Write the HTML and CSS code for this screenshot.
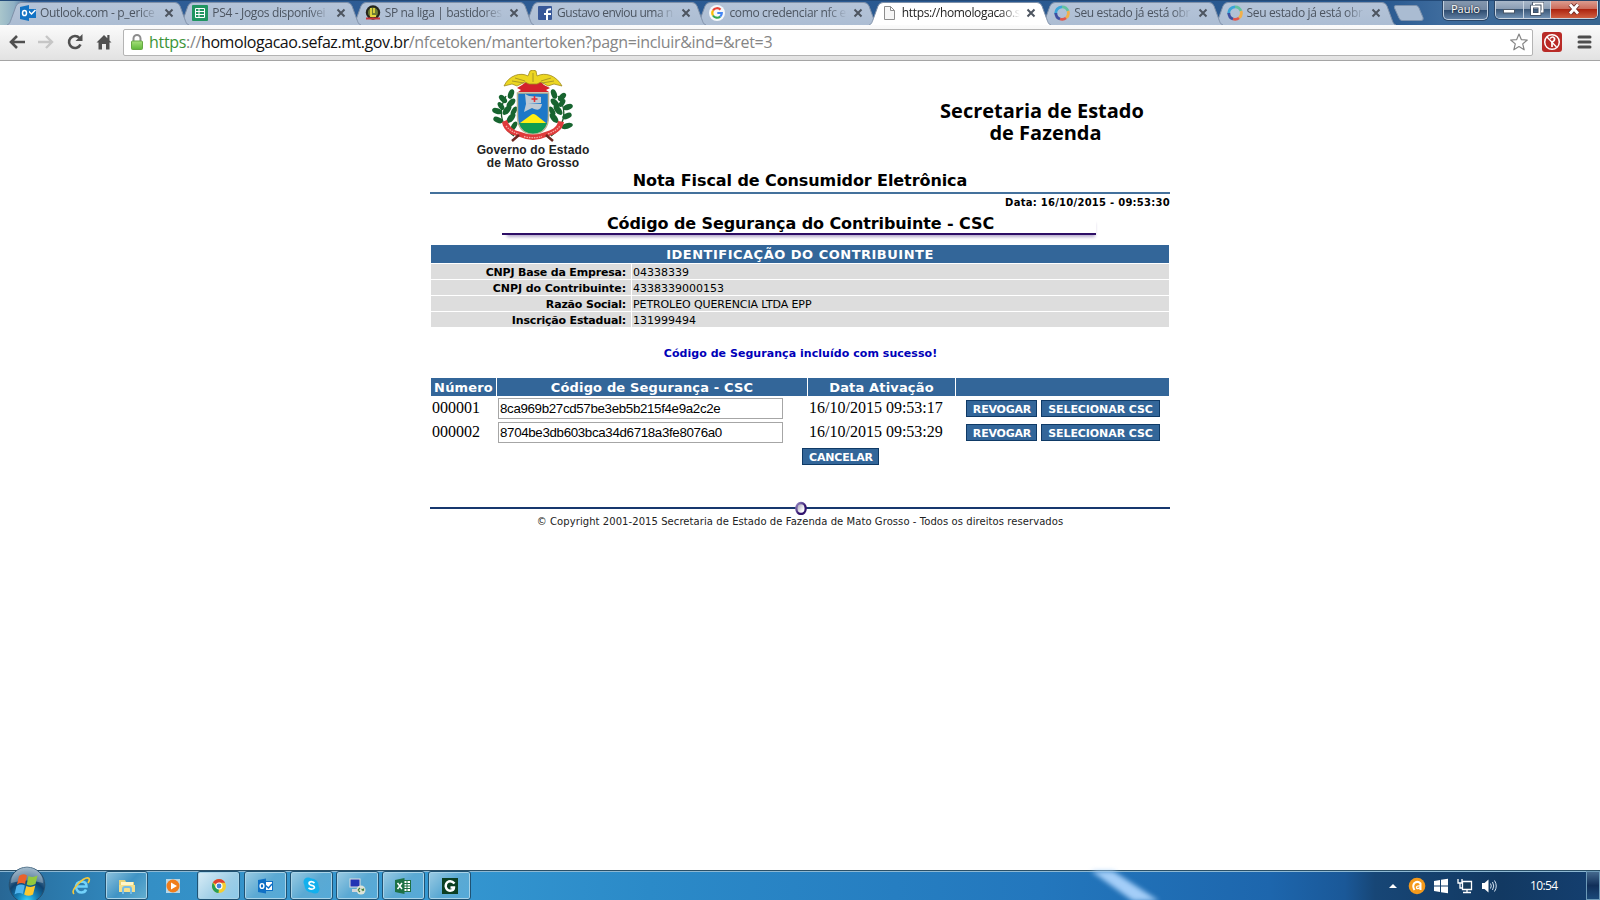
FILE: index.html
```html
<!DOCTYPE html>
<html lang="pt-BR">
<head>
<meta charset="utf-8">
<title>Nota Fiscal de Consumidor Eletrônica</title>
<link rel="stylesheet" href="styles.css">
</head>
<body>
<svg class="defs" width="0" height="0">
  <defs>
    <linearGradient id="tabFill" x1="0" y1="0" x2="0" y2="1"><stop offset="0" stop-color="#b5c4d8"/><stop offset="1" stop-color="#acbdd3"/></linearGradient>
    <linearGradient id="lockFill" x1="0" y1="0" x2="0" y2="1"><stop offset="0" stop-color="#a6e07a"/><stop offset="1" stop-color="#5fb838"/></linearGradient>
    <radialGradient id="orb" cx=".5" cy=".95" r=".95"><stop offset="0" stop-color="#35d6ff"/><stop offset=".3" stop-color="#1581b8"/><stop offset=".6" stop-color="#0f426f"/><stop offset="1" stop-color="#7fa0b8"/></radialGradient>
    <linearGradient id="ring" x1="0" y1="0" x2="1" y2="1"><stop offset="0" stop-color="#9a8cc8"/><stop offset=".6" stop-color="#32146e"/></linearGradient>
    <linearGradient id="ringIn" x1="0" y1="0" x2="1" y2="1"><stop offset="0" stop-color="#9590a8"/><stop offset=".7" stop-color="#fff"/></linearGradient>
    <symbol id="tabShape" viewBox="0 0 182 24"><path d="M0 24C3 23 3 21 5 16L9 5Q10.500 1.500 14 1.500H168Q171.500 1.500 173 5L177 16C179 21 179 23 182 24" stroke="#7f90a8"/></symbol>
    <symbol id="x" viewBox="0 0 10 10"><path d="M1.500 1.500L8.500 8.500M8.500 1.500L1.500 8.500" stroke="#4d5560" stroke-width="2"/></symbol>
    <symbol id="swirl" viewBox="0 0 16 16"><g fill="none" stroke-width="2.800"><path d="M1.800 9A6.400 6.400 0 0 1 8 1.800" stroke="#3aa5d8"/><path d="M8 1.800A6.400 6.400 0 0 1 14 6" stroke="#62c2a0"/><path d="M14 6A6.400 6.400 0 0 1 12 13" stroke="#f2b04a"/><path d="M12 13A6.400 6.400 0 0 1 6 14" stroke="#e2574c"/><path d="M6 14A6.400 6.400 0 0 1 1.800 8" stroke="#3e4fa0"/></g></symbol>
  </defs>
</svg>

<header class="browser">
  <div class="tabstrip">
    <div class="tab"><svg class="shape"><use href="#tabShape"/></svg>
      <svg class="fav" viewBox="0 0 16 16"><rect x="7" y="4" width="9" height="9" fill="#1373c4"/><path d="M7.500 5L11.500 9L15.500 5" fill="none" stroke="#fff" stroke-width="1.500"/><path d="M0 2L9 0V16L0 14Z" fill="#1373c4"/><ellipse cx="4.500" cy="8" rx="2" ry="2.600" fill="none" stroke="#fff" stroke-width="1.500"/></svg>
      <span class="title">Outlook.com - p_erice</span><svg class="close"><use href="#x"/></svg></div>
    <div class="tab"><svg class="shape"><use href="#tabShape"/></svg>
      <svg class="fav" viewBox="0 0 16 16"><rect width="16" height="16" rx="1" fill="#1f9560"/><path d="M3.500 3.500H12.500V12.500H3.500ZM3.500 6.500H12.500M3.500 9.500H12.500M7 3.500V12.500" fill="none" stroke="#fff"/></svg>
      <span class="title">PS4 - Jogos disponívei</span><svg class="close"><use href="#x"/></svg></div>
    <div class="tab"><svg class="shape"><use href="#tabShape"/></svg>
      <svg class="fav" viewBox="0 0 16 16"><circle cx="8" cy="7.500" r="7.200" fill="#25251c"/><circle cx="8" cy="7.500" r="5" fill="#6e7d34"/><path d="M6 3V11H11M9 3V8" stroke="#e5d83f" stroke-width="1.800" fill="none"/><path d="M1 13.500H15" stroke="#c5373c" stroke-width="2"/></svg>
      <span class="title">SP na liga | bastidores</span><svg class="close"><use href="#x"/></svg></div>
    <div class="tab"><svg class="shape"><use href="#tabShape"/></svg>
      <svg class="fav" viewBox="0 0 16 16"><rect x="1" y="1" width="14" height="14" rx="1" fill="#385898"/><path d="M10 15V9H14M7 9H10M10 10V6.500Q10 4 14 4.300" stroke="#fff" stroke-width="2" fill="none"/></svg>
      <span class="title tight">Gustavo enviou uma n</span><svg class="close"><use href="#x"/></svg></div>
    <div class="tab"><svg class="shape"><use href="#tabShape"/></svg>
      <svg class="fav" viewBox="0 0 16 16"><circle cx="8" cy="8" r="8" fill="#f5f8fb"/><g fill="none" stroke-width="2.200"><path d="M4 5.500A4.800 4.800 0 0 1 11.500 4.600" stroke="#e94335"/><path d="M4 5.500A4.800 4.800 0 0 0 4 10.500" stroke="#fbbc05"/><path d="M4 10.500A4.800 4.800 0 0 0 11.200 11.600" stroke="#34a853"/><path d="M11.200 11.600A4.800 4.800 0 0 0 12.800 8H8.300" stroke="#4285f4"/></g></svg>
      <span class="title">como credenciar nfc e</span><svg class="close"><use href="#x"/></svg></div>
    <div class="tab active"><svg class="shape"><use href="#tabShape"/></svg>
      <svg class="fav" viewBox="0 0 16 16"><path d="M2.500 1.500H8.500L12.500 5.500V14.500H2.500ZM8.500 1.500V5.500H12.500" fill="#f6f6f6" stroke="#8c8c8c"/></svg>
      <span class="title">https://homologacao.s</span><svg class="close"><use href="#x"/></svg></div>
    <div class="tab"><svg class="shape"><use href="#tabShape"/></svg><svg class="fav"><use href="#swirl"/></svg>
      <span class="title">Seu estado já está obr</span><svg class="close"><use href="#x"/></svg></div>
    <div class="tab"><svg class="shape"><use href="#tabShape"/></svg><svg class="fav"><use href="#swirl"/></svg>
      <span class="title">Seu estado já está obr</span><svg class="close"><use href="#x"/></svg></div>
    <svg class="newtab" viewBox="0 0 32 16"><path d="M3 .5H23Q25 .5 26 3L30 12.500Q31 15.500 28 15.500H9Q7 15.500 6 13L1.500 3Q.5 .5 3 .5Z" fill="#aabcd2" stroke="#7d92ad"/></svg>
    <span class="user">Paulo</span>
    <div class="winbtns">
      <span class="wb min"><svg width="14" height="14" viewBox="0 0 14 14"><rect x="1.500" y="7.500" width="11" height="3.500" fill="#fff" stroke="#4b5868"/></svg></span>
      <span class="wb max"><svg width="14" height="14" viewBox="0 0 14 14"><path d="M4 3V1.500H12.500V9.500H11M2 4.500H9.500V12H2Z" fill="none" stroke="#3d4a5c" stroke-width="3.500"/><path d="M4 3V1.500H12.500V9.500H11M2 4.500H9.500V12H2Z" fill="none" stroke="#fff" stroke-width="2"/></svg></span>
      <span class="wb cls"><svg width="14" height="14" viewBox="0 0 14 14"><path d="M3 2.500L11 11.500M11 2.500L3 11.500" stroke="#6b2a25" stroke-width="4.500"/><path d="M3 2.500L11 11.500M11 2.500L3 11.500" stroke="#fff" stroke-width="2.800"/></svg></span>
    </div>
  </div>
  <div class="toolbar">
    <svg class="tool" viewBox="0 0 18 18"><path d="M17 9H3M9 3L3 9L9 15" fill="none" stroke="#505050" stroke-width="2.600"/></svg>
    <svg class="tool" viewBox="0 0 18 18"><path d="M1 9H15M9 3L15 9L9 15" fill="none" stroke="#c6c6c6" stroke-width="2.400"/></svg>
    <svg class="tool" viewBox="0 0 18 18"><path d="M14.500 11.500A6 6 0 1 1 13.500 5" fill="none" stroke="#505050" stroke-width="2.600"/><path d="M16.500 1V8H9.500Z" fill="#505050"/></svg>
    <svg class="tool" viewBox="0 0 18 18"><path d="M9 2L1.500 9.500H3.500V16.500H7V11H11V16.500H14.500V9.500H16.500L14.500 7.500V2H12.300V5.300Z" fill="#505050"/></svg>
    <div class="omnibox">
      <svg class="lock" viewBox="0 0 12 16"><path d="M2.500 8V4.500A3.500 3.500 0 0 1 9.500 4.500V8" fill="none" stroke="#8d8d8d" stroke-width="2"/><rect x=".5" y="7" width="11" height="8.500" rx="1" fill="url(#lockFill)" stroke="#67a844"/></svg>
      <span class="url"><span class="sec">https</span>://<span class="host">homologacao.sefaz.mt.gov.br</span>/nfcetoken/mantertoken?pagn=incluir&amp;ind=&amp;ret=3</span>
      <svg class="star" viewBox="0 0 18 18"><path d="M9 1L11.300 6.600L17.300 7L12.700 10.900L14.200 16.800L9 13.600L3.800 16.800L5.300 10.900L.7 7L6.700 6.600Z" fill="#fff" stroke="#858585" stroke-width="1.200" stroke-linejoin="round"/></svg>
    </div>
    <svg class="ext" viewBox="0 0 20 20"><rect width="20" height="20" rx="3" fill="#b92b27"/><circle cx="10" cy="10" r="7.300" fill="none" stroke="#fff" stroke-width="1.500"/><path d="M5 5L14.500 15" stroke="#fff" stroke-width="1.300"/><path d="M8 6.500Q11 3.500 12.500 6.500Q13 9 10 10V15" fill="none" stroke="#fff" stroke-width="1.700"/></svg>
    <svg class="menu" viewBox="0 0 14 14"><path d="M1.500 2H12.500M1.500 7H12.500M1.500 12H12.500" stroke="#4d4d4d" stroke-width="3" stroke-linecap="round"/></svg>
  </div>
</header>

<main class="page">
  <div class="brand">
    <div class="gov">
      <svg class="crest" viewBox="0 0 82 72">
        <g stroke="#1d5a2a" stroke-width="1.300" fill="none"><path d="M22 66C10 58 5 42 14 26M59 66C71 58 77 42 66 26"/></g>
        <g fill="#17642f">
          <ellipse cx="19" cy="24" rx="2.800" ry="5" transform="rotate(20 19 24)"/><ellipse cx="11" cy="29" rx="2.800" ry="5" transform="rotate(-45 11 29)"/><ellipse cx="19" cy="33" rx="3" ry="5.500" transform="rotate(45 19 33)"/><ellipse cx="5" cy="41" rx="2.800" ry="5" transform="rotate(-70 5 41)"/><ellipse cx="15" cy="40" rx="3" ry="6" transform="rotate(40 15 40)"/><ellipse cx="22" cy="41" rx="2.500" ry="5" transform="rotate(30 22 41)"/><ellipse cx="6" cy="50" rx="2.800" ry="5" transform="rotate(-65 6 50)"/><ellipse cx="19" cy="48" rx="3" ry="6" transform="rotate(40 19 48)"/><ellipse cx="22" cy="56" rx="2.500" ry="5" transform="rotate(30 22 56)"/><ellipse cx="9" cy="36" rx="2.500" ry="4.500" transform="rotate(-35 9 36)"/>
          <ellipse cx="62" cy="24" rx="2.800" ry="5" transform="rotate(-20 62 24)"/><ellipse cx="70" cy="27" rx="2.800" ry="5" transform="rotate(45 70 27)"/><ellipse cx="63" cy="33" rx="3" ry="5.500" transform="rotate(-45 63 33)"/><ellipse cx="76" cy="37" rx="2.800" ry="5" transform="rotate(70 76 37)"/><ellipse cx="66" cy="40" rx="3" ry="6" transform="rotate(-40 66 40)"/><ellipse cx="60" cy="41" rx="2.500" ry="5" transform="rotate(-30 60 41)"/><ellipse cx="75" cy="46" rx="2.800" ry="5" transform="rotate(65 75 46)"/><ellipse cx="62" cy="48" rx="3" ry="6" transform="rotate(-40 62 48)"/><ellipse cx="75" cy="56" rx="2.800" ry="6" transform="rotate(75 75 56)"/><ellipse cx="70" cy="33" rx="2.500" ry="4.500" transform="rotate(35 70 33)"/>
        </g>
        <path d="M30 15L25 18L29 20L26 22H57L54 20L58 18L52 15L49 12H34Z" fill="#d3222b"/>
        <path d="M12 16C17 5 29 2 36 6L38 1Q41 -1 44 1L45 6C53 2 64 5 70 16L62 14L56 16L49 12L45 14H37L33 12L25 16L20 14Z" fill="#ecd622" stroke="#a08a20" stroke-width=".8"/>
        <path d="M23 8L33 11M20 11L32 13M59 8L49 11M62 11L50 13M41 3V12" stroke="#9b8a25" stroke-width=".8"/>
        <path d="M25.500 23H56.500V46Q56.500 63 41 64Q25.500 63 25.500 46Z" fill="#1e78c8" stroke="#b9b391" stroke-width="1.500"/>
        <path d="M27 53H55Q52 63 41 63.500Q30 63 27 53Z" fill="#109c50"/><path d="M28 53L39 45Q41 43 44 45L54 53Z" fill="#ffef12"/>
        <path d="M33 24L37 26L49 27V33L36 34L50 34C49 40 46 41 40 38L32 42L34 34Z" fill="#bdc9d4"/><path d="M42.500 26V32M39.500 29H45.500" stroke="#e32b32" stroke-width="1.600"/>
        <path d="M10 52L15 50C18 59 24 61 29 62Q41 67 53 62C59 60 65 58 66 51L72 52C71 60 63 65 54 67Q41 73 28 67C18 65 11 60 10 52Z" fill="#df3b3b"/>
        <path d="M14 56Q19 62 27 64M32 66.500Q41 69 50 66.500M56 64Q64 61 68 56" fill="none" stroke="#f6aaa4" stroke-width="1.300" stroke-dasharray="1.500 1"/>
        <path d="M20 71L27 65M61 71L54 65" stroke="#6c2720" stroke-width="2.500"/>
      </svg>
      <div class="govname">Governo do Estado<br>de Mato Grosso</div>
    </div>
    <div class="sec-name"><div class="l1">Secretaria de Estado</div><div class="l2">de Fazenda</div></div>
  </div>
  <h1 class="nf">Nota Fiscal de Consumidor Eletrônica</h1>
  <div class="date"><span>Data: 16/10/2015 - 09:53:30</span></div>
  <h2 class="csc">Código de Segurança do Contribuinte - CSC</h2>
  <div class="ident">
    <div class="bar">IDENTIFICAÇÃO DO CONTRIBUINTE</div>
    <div class="lab">CNPJ Base da Empresa:</div><div class="val">04338339</div>
    <div class="lab wide">CNPJ do Contribuinte:</div><div class="val">4338339000153</div>
    <div class="lab">Razão Social:</div><div class="val name">PETROLEO QUERENCIA LTDA EPP</div>
    <div class="lab">Inscrição Estadual:</div><div class="val">131999494</div>
  </div>
  <p class="ok">Código de Segurança incluído com sucesso!</p>
  <div class="tokens">
    <div class="th">Número</div><div class="th">Código de Segurança - CSC</div><div class="th">Data Ativação</div><div class="th"></div>
    <div class="td">000001</div><div class="td"><div class="field">8ca969b27cd57be3eb5b215f4e9a2c2e</div></div><div class="td">16/10/2015 09:53:17</div><div class="td acts"><span class="btn rev">REVOGAR</span><span class="btn sel">SELECIONAR CSC</span></div>
    <div class="td">000002</div><div class="td"><div class="field">8704be3db603bca34d6718a3fe8076a0</div></div><div class="td">16/10/2015 09:53:29</div><div class="td acts"><span class="btn rev">REVOGAR</span><span class="btn sel">SELECIONAR CSC</span></div>
  </div>
  <div class="cancel"><span class="btn can">CANCELAR</span></div>
  <div class="rule"><svg width="12" height="14" viewBox="0 0 12 14"><ellipse cx="6" cy="7.500" rx="4.700" ry="5.500" fill="url(#ringIn)" stroke="url(#ring)" stroke-width="2.300"/></svg></div>
  <footer class="copy">© Copyright 2001-2015 Secretaria de Estado de Fazenda de Mato Grosso - Todos os direitos reservados</footer>
</main>

<div class="taskbar">
  <svg class="beam" width="90" height="30" viewBox="0 0 90 30"><path d="M8 0H30L76 30H50Z" fill="#a4cef8"/></svg>
  <svg class="start" viewBox="0 0 38 38"><circle cx="19" cy="19" r="17.800" fill="url(#orb)" stroke="#27506f"/><path d="M3 17A16 16 0 0 1 35 17Q19 12 3 17Z" fill="#fff" opacity=".3"/><path d="M11 10Q15 7 19 9.500L17 18Q13 16 9 18.500Z" fill="#e9622c"/><path d="M20.500 10Q25 12 29.500 9.500L27.500 18Q23 20.500 18.700 18.500Z" fill="#93c83e"/><path d="M8.500 20Q12.500 17.500 16.800 19.500L14.800 28Q11 26 6.500 28.500Z" fill="#4fb3ee"/><path d="M18.300 20Q23 22 27.300 19.500L25 28.500Q20.500 31 16.200 28.500Z" fill="#fbc82f"/></svg>
  <span class="tb plain ie"><svg width="20" height="20" viewBox="0 0 20 20"><path d="M5 10.500H15.500Q15.500 5.500 10.500 5.500Q5 6 5 11.500Q6 16.500 10.500 16.500Q14 16.500 15 13.500" fill="none" stroke="#73d2fa" stroke-width="2.500"/><path d="M3 18Q0 15 7 8Q15 0 18 2.500Q19 4 17 7" fill="none" stroke="#f2c83b" stroke-width="1.700"/></svg></span>
  <span class="tb dim"><svg width="18" height="18" viewBox="0 0 18 18"><path d="M1 3H7L8 5H16V15H1Z" fill="#e9d377"/><path d="M3 5H15V8H3Z" fill="#fff6c8"/><path d="M1 8H17V15H1Z" fill="#f3df8d"/><path d="M5 17V12Q5 10 7 10H11Q13 10 13 12V17" fill="none" stroke="#75bce7" stroke-width="2"/></svg></span>
  <span class="tb plain media"><svg width="16" height="16" viewBox="0 0 16 16"><rect x="1" y="1" width="14" height="14" fill="#b8d7e7"/><circle cx="8" cy="8" r="6.500" fill="#f07d1b"/><path d="M6 4.500L12 8L6 11.500Z" fill="#fff"/></svg></span>
  <span class="tb on"><svg width="16" height="16" viewBox="0 0 16 16"><circle cx="8" cy="8" r="7" fill="#f4ce30"/><path d="M8 8L1.900 4.500A7 7 0 0 1 14.200 4.700H8Z" fill="#dd4031"/><path d="M1.900 4.500L5 10L8 10.500L7.500 15A7 7 0 0 1 1.900 4.500Z" fill="#279e55"/><circle cx="8" cy="8" r="3" fill="#4382dc" stroke="#fff" stroke-width="1.200"/></svg></span>
  <span class="tb"><svg width="16" height="16" viewBox="0 0 16 16"><rect x="7.500" y="3.500" width="8" height="9" fill="#fff" stroke="#0f70c5"/><path d="M8 7L11.500 10L15 6" fill="none" stroke="#0f70c5" stroke-width="1.500"/><path d="M1 2L9 .5V15.500L1 14Z" fill="#0f70c5"/><ellipse cx="5" cy="8" rx="1.900" ry="2.400" fill="none" stroke="#fff" stroke-width="1.400"/></svg></span>
  <span class="tb"><svg width="17" height="17" viewBox="0 0 17 17"><circle cx="8.500" cy="8.500" r="7" fill="#13b0ed"/><circle cx="5" cy="5" r="4.500" fill="#13b0ed"/><circle cx="12" cy="12" r="4.500" fill="#13b0ed"/><path d="M11.500 6Q8.500 3.500 6.200 5.500Q5.500 7.700 8.500 8.300Q12 9 11.300 11Q9 13.300 5.500 11" fill="none" stroke="#fff" stroke-width="1.700"/></svg></span>
  <span class="tb"><svg width="18" height="18" viewBox="0 0 18 18"><rect x="2" y="2" width="10" height="8" fill="#2335b4" stroke="#ddd"/><path d="M4 12H11V15H4Z" fill="#d3d5d9"/><circle cx="13" cy="13" r="4.500" fill="#dde3d8"/><path d="M10 13L12 15M12 11L10 13M13.500 12L16 13.500M16 11.500L14 14" stroke="#48803c" stroke-width="1.200"/></svg></span>
  <span class="tb"><svg width="16" height="16" viewBox="0 0 16 16"><rect x="8.500" y="2.500" width="7" height="11" fill="#fff" stroke="#1e7145"/><path d="M9 5.500H15M9 8H15M9 10.500H15M12 3V13" stroke="#1e7145"/><path d="M0 2L9.500 0V16L0 14Z" fill="#1e7145"/><path d="M2.500 5L7 11M7 5L2.500 11" stroke="#fff" stroke-width="1.500"/></svg></span>
  <span class="tb"><svg width="16" height="16" viewBox="0 0 16 16"><rect width="16" height="16" fill="#0b3f22"/><path d="M12.500 5.500Q10 2.500 6.500 3.500Q3.500 5 3.700 8.500Q4.500 12.500 8 12.700Q12 12.500 12 9.500H8.500" fill="none" stroke="#fff" stroke-width="2.400"/></svg></span>
  <div class="tray">
    <svg width="8" height="6" viewBox="0 0 8 6"><path d="M0 5L4 1L8 5Z" fill="#fff"/></svg>
    <svg class="avast" width="18" height="18" viewBox="0 0 18 18"><circle cx="9" cy="9" r="8.300" fill="#f49a1c"/><path d="M6.500 13Q4 9 6.500 6Q10 3.500 12.500 6.500V13" fill="none" stroke="#fff" stroke-width="2"/><path d="M12 9Q8 8.500 8.500 11Q10 12.500 12 10.500" fill="none" stroke="#fff" stroke-width="1.300"/></svg>
    <svg class="win" width="16" height="16" viewBox="0 0 16 16"><path d="M1 3L7 2V7.500H1ZM8 1.800L15 .8V7.500H8ZM1 8.500H7V14L1 13ZM8 8.500H15V15.200L8 14.200Z" fill="#fff"/></svg>
    <svg class="net" width="16" height="16" viewBox="0 0 16 16"><path d="M5.500 3.500H14.500V11.500H5.500Z" fill="#173b5b" stroke="#fff" stroke-width="1.300"/><path d="M10 12V14M6 14.500H14M1 1V5H5V1M3 5V10H5" stroke="#fff" stroke-width="1.300" fill="none"/></svg>
    <svg class="snd" width="16" height="16" viewBox="0 0 16 16"><path d="M1 5H3.500L7.500 1.500V14.500L3.500 11H1Z" fill="#fff"/><path d="M9.500 5.500Q11 8 9.500 10.500M11.500 4Q14 8 11.500 12M13.500 2.500Q17 8 13.500 13.500" fill="none" stroke="#d6e4f2"/></svg>
    <span class="clock">10:54</span>
  </div>
  <span class="desk"></span>
</div>
</body>
</html>
```
FILE: styles.css
```css
* { box-sizing: border-box; }
body { margin: 0; width: 1600px; height: 900px; overflow: hidden; display: flex; flex-direction: column; background: #fff; color: #000; }
svg { display: block; flex: none; }
.defs { position: absolute; }

/* browser frame */
.browser { flex: none; }
.tabstrip { height: 25px; display: flex; padding-left: 7px; border-top: 1px solid #234a78; background: linear-gradient(90deg, #a9c6cc 0, #8fb0c4 14px, #2f5d96 30px, #28588f 1380px, #3d6b9d 1440px, #38658f 1600px); }
.tab { position: relative; flex: none; width: 182px; height: 24px; margin-right: -9.650px; display: flex; align-items: center; padding-left: 13px; color: #4c5561; }
.tab:nth-child(1) { z-index: 9; } .tab:nth-child(2) { z-index: 8; } .tab:nth-child(3) { z-index: 7; } .tab:nth-child(4) { z-index: 6; } .tab:nth-child(5) { z-index: 5; } .tab:nth-child(7) { z-index: 3; } .tab:nth-child(8) { z-index: 2; }
.shape { position: absolute; left: 0; top: 0; width: 182px; height: 24px; z-index: -1; fill: url(#tabFill); }
.tab.active { z-index: 10; color: #222; }
.tab.active .shape { fill: #fff; }
.fav { width: 16px; height: 16px; }
.title { width: 118px; margin-left: 4px; font: 12px/20px "Open Sans", sans-serif; letter-spacing: -.35px; white-space: nowrap; overflow: hidden; -webkit-mask-image: linear-gradient(90deg, #000 98px, transparent 118px); mask-image: linear-gradient(90deg, #000 98px, transparent 118px); }
.title.tight { letter-spacing: -.5px; }
.close { width: 10px; height: 10px; margin-left: 6px; }
.newtab { width: 32px; height: 16px; margin: 4px 0 0 7px; }
.user { width: 45px; height: 19px; margin-left: 18px; border: 1px solid #c3d0df; border-top: 0; border-radius: 0 0 5px 5px; background: linear-gradient(#8497ae 0, #7388a2 50%, #2f4c70 51%, #5f7ea1); box-shadow: 0 0 0 1px #294567; color: #fff; font: 11px/15px "Open Sans", sans-serif; text-align: center; text-shadow: 0 0 2px #000; }
.winbtns { display: flex; height: 18px; margin-left: 7px; border: 1px solid #c9d4e0; border-top: 0; border-radius: 0 0 5px 5px; box-shadow: 0 0 0 1px #294567; overflow: hidden; }
.wb { display: flex; align-items: center; justify-content: center; background: linear-gradient(#a9b8c9 0, #8a9db4 45%, #3b5878 50%, #6f90b3); padding-bottom: 2px; }
.min { width: 28px; border-right: 1px solid #c9d4e0; }
.max { width: 27px; border-right: 1px solid #c9d4e0; }
.cls { width: 46px; background: linear-gradient(#dc9c8f 0, #cc6d5c 45%, #ad2510 50%, #cf5f40); }
.toolbar { height: 36px; display: flex; align-items: center; background: linear-gradient(#fbfbfb, #e2e2e2); border-bottom: 1px solid #a5a5a5; padding: 0 8px 1px; }
.tool { width: 18px; height: 18px; margin-right: 11px; }
.omnibox { width: 1410px; height: 27px; display: flex; align-items: center; margin-left: -1px; border: 1px solid #b4b4b4; border-radius: 2px; background: #fff; padding: 0 4px 0 7px; }
.lock { width: 12px; height: 16px; }
.url { flex: 1; margin-left: 6px; font: 16px/24px "Open Sans", sans-serif; letter-spacing: -.32px; color: #858585; white-space: nowrap; }
.sec { color: #3c9438; }
.host { color: #111; letter-spacing: -.44px; }
.star { width: 18px; height: 18px; }
.ext { width: 20px; height: 20px; margin-left: 9px; }
.menu { width: 15px; height: 14px; margin-left: 15px; }

/* page */
.page { flex: 1; width: 740px; margin: 0 auto; display: flex; flex-direction: column; font-family: "DejaVu Sans", Verdana, sans-serif; }
.brand { height: 110px; display: flex; justify-content: space-between; padding: 9px 26px 0 46px; }
.gov { width: 114px; display: flex; flex-direction: column; align-items: center; }
.crest { width: 82px; height: 72px; }
.govname { margin-top: 2px; font: bold 12px/13px "Liberation Sans", Arial, sans-serif; letter-spacing: .12px; text-align: center; white-space: nowrap; color: #222; }
.sec-name { margin-top: 30px; font: bold 20px/22px "Open Sans", sans-serif; text-align: center; white-space: nowrap; width: 204px; }
.l2 { padding-left: 7px; }
h1, h2, p { margin: 0; }
.nf { height: 23px; border-bottom: 2px solid #44719c; font-size: 16px; line-height: 20px; letter-spacing: -.09px; text-align: center; white-space: nowrap; }
.date { height: 21px; font-weight: bold; font-size: 10px; line-height: 17px; letter-spacing: .26px; text-align: right; white-space: nowrap; }
.csc { width: 594px; height: 20px; margin: 0 0 0 72px; padding-left: 3px; border-bottom: 2px solid #2d0e66; box-shadow: 2px 5px 3px -3px #b5abcc; font-size: 16px; line-height: 18px; letter-spacing: -.1px; text-align: center; white-space: nowrap; }
.ident { margin: 10px 1px 0; display: grid; grid-template-columns: 200px 1fr; gap: 1px; grid-template-rows: 18px repeat(4, 15px); font-size: 11px; line-height: 17px; white-space: nowrap; }
.bar { grid-column: 1 / 3; background: #369; color: #fff; font-weight: bold; font-size: 13px; line-height: 19px; letter-spacing: .5px; text-align: center; }
.lab { background: #ddd; font-weight: bold; text-align: right; padding-right: 5px; letter-spacing: -.18px; }
.lab.wide { letter-spacing: -.08px; }
.val { background: #ddd; padding-left: 1px; }
.name { letter-spacing: -.1px; }
.ok { margin-top: 17px; height: 19px; padding-left: 1px; line-height: 20px; font-size: 11px; font-weight: bold; letter-spacing: .05px; color: #0000b8; text-align: center; white-space: nowrap; }
.tokens { margin: 15px 1px 0; display: grid; grid-template-columns: 65px 310px 147px 213px; grid-template-rows: 18px 23px 23px; gap: 1px; white-space: nowrap; }
.th { background: #369; color: #fff; font-weight: bold; font-size: 13px; line-height: 19px; letter-spacing: .16px; text-align: center; }
.td { font: 16px/22px "Liberation Serif", "Times New Roman", serif; padding: 1px 1px 0; }
.td:nth-child(n+5) { line-height: 20px; }
.field { width: 285px; height: 21px; border: 1px solid #a6a6a6; padding: 0 1px; font: 13.333px/19px "Liberation Sans", Arial, sans-serif; letter-spacing: -.34px; }
.acts { display: flex; padding: 3px 0 0 10px; gap: 4px; }
.btn { height: 17px; border: 1px solid #0f3a66; background: #369; color: #fff; font: bold 11px/17px "DejaVu Sans", Verdana, sans-serif; letter-spacing: -.2px; text-align: center; white-space: nowrap; }
.rev { width: 71px; padding-left: 1px; } .sel { width: 119px; letter-spacing: -.08px; } .can { width: 77px; padding-left: 1px; }
.cancel { display: flex; padding-left: 372px; margin-top: 4px; }
.rule { height: 2px; margin-top: 42px; background: #17376e; display: flex; justify-content: center; align-items: center; padding-left: 2px; }
.copy { margin-top: 5px; font-size: 10px; line-height: 16px; letter-spacing: .07px; text-align: center; white-space: nowrap; color: #222; }

/* taskbar */
.taskbar { position: relative; flex: none; height: 30px; display: flex; align-items: center; border-top: 1px solid #2a5068; box-shadow: inset 0 1px #8db8d3; background: linear-gradient(90deg, #286795 0, #2b77a9 50px, #348fc5 150px, #3699d2 400px, #2b8ac8 650px, #2377bd 1040px, #1d66ad 1270px, #1a5898 1345px, #174676 1375px, #123962 1500px, #143f70 1600px); }
.beam { position: absolute; left: 1083px; top: 0; filter: blur(2.500px); }
.start { width: 38px; height: 38px; margin: -2px 13px 0 8px; }
.tb { width: 43px; height: 29px; margin-right: 3.150px; display: flex; align-items: center; justify-content: center; border: 1px solid #1f5273; border-radius: 3px; background: linear-gradient(135deg, #9bcbe3, #5ba9d3 50%, #55aad8); box-shadow: inset 0 0 0 1px #a8d3e8; }
.tb.dim { background: linear-gradient(135deg, #8fc3de, #3f93c4 50%, #64afd0); }
.tb.plain { border: 0; background: none; box-shadow: none; }
.tb.on { background: linear-gradient(135deg, #d9edf6, #9dcde6 60%, #8bc9e9); }
.tray { display: flex; align-items: center; margin-left: auto; padding-top: 1px; }
.avast { margin-left: 11px; } .win { margin-left: 7px; } .net { margin-left: 8px; } .snd { margin-left: 8px; }
.clock { margin-left: 33px; width: 30px; font: 12px/18px "Open Sans", sans-serif; letter-spacing: -.6px; color: #fff; }
.desk { width: 14px; height: 29px; margin-left: 26px; border: 1px solid #6d9ab8; background: linear-gradient(#44688d, #112f59 50%, #1b4979); }
```
